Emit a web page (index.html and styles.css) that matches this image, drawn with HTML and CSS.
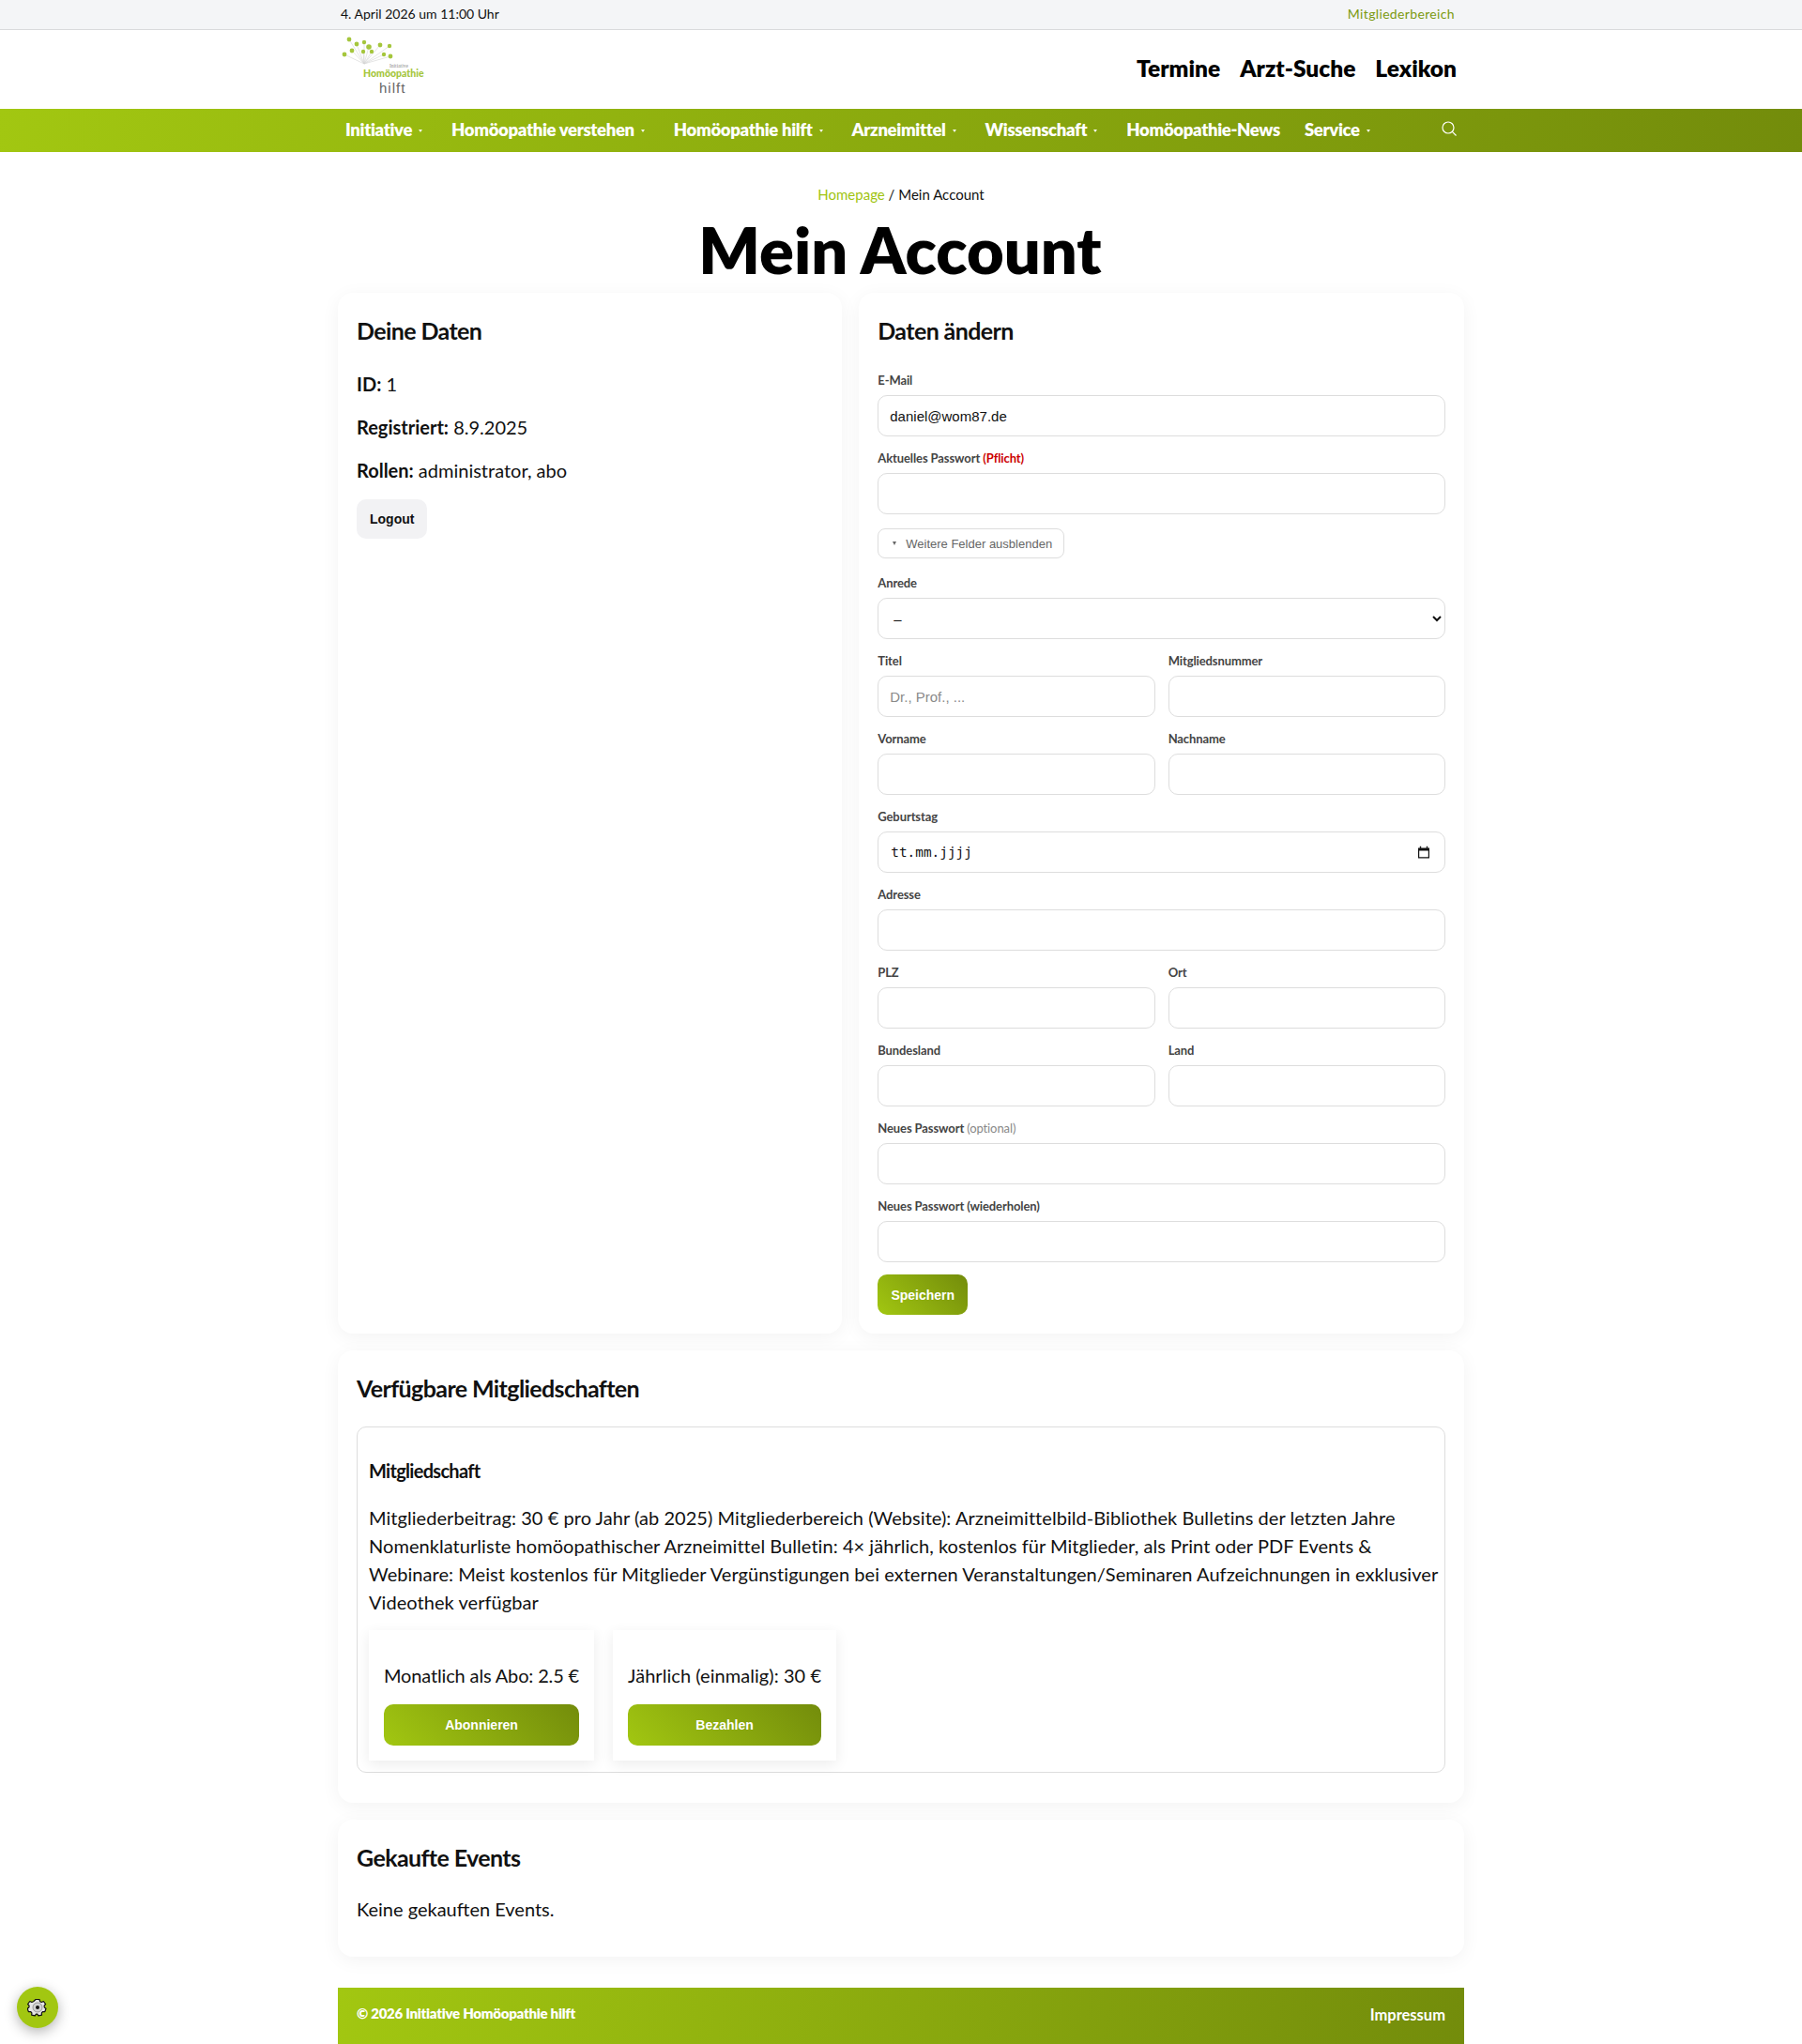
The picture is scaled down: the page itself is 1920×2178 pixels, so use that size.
FILE: index.html
```html
<!DOCTYPE html>
<html lang="de">
<head>
	<meta charset="utf-8">
	<meta name="viewport" content="width=device-width, initial-scale=1">
	<title>Mein Account</title>
	<link rel="stylesheet" href="styles.css">
</head>
<body>
	<div class="topbar">
		<div class="wrap topbar-inner">
			<span>4. April 2026 um 11:00 Uhr</span>
			<a href="#" class="member-link">Mitgliederbereich</a>
		</div>
	</div>

	<header class="header">
		<div class="wrap header-inner">
			<a href="#" class="logo">
				<svg width="90" height="64" viewBox="363 38 90 64">
					<g stroke="#d4d4d4" stroke-width="0.6">
						<line x1="388" y1="69" x2="372" y2="43"/>
						<line x1="388" y1="69" x2="380" y2="48"/>
						<line x1="388" y1="69" x2="388" y2="46"/>
						<line x1="388" y1="69" x2="393" y2="51"/>
						<line x1="388" y1="69" x2="405" y2="49"/>
						<line x1="388" y1="69" x2="415" y2="50"/>
						<line x1="388" y1="69" x2="367" y2="59"/>
						<line x1="388" y1="69" x2="375" y2="55"/>
						<line x1="388" y1="69" x2="387" y2="56"/>
						<line x1="388" y1="69" x2="396" y2="56"/>
						<line x1="388" y1="69" x2="409" y2="59"/>
						<line x1="388" y1="69" x2="416" y2="61"/>
					</g>
					<g fill="#a5c63c">
						<circle cx="372" cy="43" r="2.4"/>
						<circle cx="380" cy="48" r="2.4"/>
						<circle cx="388" cy="46" r="2.2"/>
						<circle cx="393" cy="51" r="2.8"/>
						<circle cx="405" cy="49" r="2.4"/>
						<circle cx="415" cy="50" r="2.2"/>
						<circle cx="367" cy="59" r="2.4"/>
						<circle cx="375" cy="55" r="2.4"/>
						<circle cx="387" cy="56" r="2.2"/>
						<circle cx="396" cy="56" r="2.2"/>
						<circle cx="409" cy="59" r="2.2"/>
						<circle cx="416" cy="61" r="2.4"/>
					</g>
					<text x="415" y="73" class="logo-small">Initiative</text>
					<text x="387" y="83" class="logo-green">Homöopathie</text>
					<text x="404" y="100" class="logo-dark">hilft</text>
				</svg>
			</a>
			<nav class="quick-links">
				<a href="#">Termine</a>
				<a href="#">Arzt-Suche</a>
				<a href="#">Lexikon</a>
			</nav>
		</div>
	</header>

	<nav class="mainnav">
		<div class="wrap mainnav-inner">
			<a href="#" class="has-caret">Initiative</a>
			<a href="#" class="has-caret">Homöopathie verstehen</a>
			<a href="#" class="has-caret">Homöopathie hilft</a>
			<a href="#" class="has-caret">Arzneimittel</a>
			<a href="#" class="has-caret">Wissenschaft</a>
			<a href="#">Homöopathie-News</a>
			<a href="#" class="has-caret">Service</a>
			<svg class="search-icon" width="18" height="18" viewBox="0 0 18 18" fill="none" stroke="#fff" stroke-width="1.2">
				<circle cx="8" cy="8" r="6"/>
				<line x1="12.4" y1="12.4" x2="16.5" y2="16.5"/>
			</svg>
		</div>
	</nav>

	<main class="content">
		<p class="breadcrumb"><a href="#">Homepage</a> / Mein Account</p>
		<h1>Mein Account</h1>

		<div class="account-grid">
			<section class="card">
				<h2>Deine Daten</h2>
				<p class="info info-first"><strong>ID:</strong> 1</p>
				<p class="info"><strong>Registriert:</strong> 8.9.2025</p>
				<p class="info"><strong>Rollen:</strong> administrator, abo</p>
				<button class="btn-logout">Logout</button>
			</section>

			<section class="card">
				<h2>Daten ändern</h2>
				<form class="account-form">
					<div class="field">
						<label>E-Mail</label>
						<input type="email" value="daniel@wom87.de">
					</div>
					<div class="field">
						<label>Aktuelles Passwort <span class="required">(Pflicht)</span></label>
						<input type="password">
					</div>
					<button type="button" class="toggle-btn"><span class="toggle-caret"></span>Weitere Felder ausblenden</button>
					<div class="field">
						<label>Anrede</label>
						<select><option>–</option></select>
					</div>
					<div class="field-row">
						<div class="field">
							<label>Titel</label>
							<input type="text" placeholder="Dr., Prof., ...">
						</div>
						<div class="field">
							<label>Mitgliedsnummer</label>
							<input type="text">
						</div>
					</div>
					<div class="field-row">
						<div class="field">
							<label>Vorname</label>
							<input type="text">
						</div>
						<div class="field">
							<label>Nachname</label>
							<input type="text">
						</div>
					</div>
					<div class="field">
						<label>Geburtstag</label>
						<div class="date-input">
							<span>tt.mm.jjjj</span>
							<svg width="14" height="14" viewBox="0 0 14 14">
								<path d="M1 2.5h12v11H1z M2.2 5.5v6.8h9.6v-6.8z" fill="#111" fill-rule="evenodd"/>
								<path d="M3.5 .8v2M10.5 .8v2" stroke="#111" stroke-width="1.4"/>
							</svg>
						</div>
					</div>
					<div class="field">
						<label>Adresse</label>
						<input type="text">
					</div>
					<div class="field-row">
						<div class="field">
							<label>PLZ</label>
							<input type="text">
						</div>
						<div class="field">
							<label>Ort</label>
							<input type="text">
						</div>
					</div>
					<div class="field-row">
						<div class="field">
							<label>Bundesland</label>
							<input type="text">
						</div>
						<div class="field">
							<label>Land</label>
							<input type="text">
						</div>
					</div>
					<div class="field">
						<label>Neues Passwort <span class="optional">(optional)</span></label>
						<input type="password">
					</div>
					<div class="field">
						<label>Neues Passwort (wiederholen)</label>
						<input type="password">
					</div>
					<button type="button" class="btn-green btn-save">Speichern</button>
				</form>
			</section>
		</div>

		<section class="card">
			<h2>Verfügbare Mitgliedschaften</h2>
			<div class="plan">
				<h3>Mitgliedschaft</h3>
				<p>Mitgliederbeitrag: 30 € pro Jahr (ab 2025) Mitgliederbereich (Website): Arzneimittelbild-Bibliothek Bulletins der letzten Jahre Nomenklaturliste homöopathischer Arzneimittel Bulletin: 4× jährlich, kostenlos für Mitglieder, als Print oder PDF Events &amp; Webinare: Meist kostenlos für Mitglieder Vergünstigungen bei externen Veranstaltungen/Seminaren Aufzeichnungen in exklusiver Videothek verfügbar</p>
				<div class="prices">
					<div class="price">
						<p>Monatlich als Abo: 2.5 €</p>
						<button class="btn-green">Abonnieren</button>
					</div>
					<div class="price">
						<p>Jährlich (einmalig): 30 €</p>
						<button class="btn-green">Bezahlen</button>
					</div>
				</div>
			</div>
		</section>

		<section class="card">
			<h2>Gekaufte Events</h2>
			<p class="no-events">Keine gekauften Events.</p>
		</section>
	</main>

	<footer class="footer">
		<span class="copyright">© 2026 Initiative Homöopathie hilft</span>
		<a href="#">Impressum</a>
	</footer>

	<button class="cookie-btn" aria-label="Einstellungen">
		<svg width="22" height="22" viewBox="0 0 22 22">
			<path d="M9 2.5h4l.6 2.2 1.7.8 2.1-1 2.2 3-1.5 1.6.2 1.9 1.7 1.2-1.2 3.4-2.2-.1-1.3 1.4.2 2.2-3.6.8-1.1-1.8H9.4l-1.1 1.8-3.6-.8.2-2.2-1.3-1.4-2.2.1L.2 12.2l1.7-1.2.2-1.9L.6 7.5l2.2-3 2.1 1 1.7-.8z" fill="#e6e6e6" stroke="#111" stroke-width="1.2" stroke-linejoin="round"/>
			<circle cx="11" cy="11" r="5" fill="#d2d2d2" stroke="#888" stroke-width="0.8"/>
			<circle cx="11" cy="11" r="2" fill="#111"/>
		</svg>
	</button>
</body>
</html>
```

FILE: styles.css
```css
* {
	box-sizing: border-box;
}
body {
	margin: 0;
	font-family: Lato, "Liberation Sans", sans-serif;
	background: #fff;
	color: #111;
}
a {
	text-decoration: none;
}
.wrap {
	width: 1200px;
	margin: 0 auto;
	padding: 0 8px 0 3px;
}

.topbar {
	height: 32px;
	background: #f4f5f7;
	border-bottom: 1px solid #d9dadc;
	font-size: 14px;
}
.topbar-inner {
	display: flex;
	justify-content: space-between;
	align-items: center;
	height: 29px;
	padding-right: 10px;
}
.member-link {
	color: #7c9a10;
	letter-spacing: 0.35px;
}

.header-inner {
	display: flex;
	justify-content: space-between;
	align-items: center;
	height: 84px;
	padding-bottom: 3px;
}
.logo {
	display: block;
	height: 64px;
	margin-top: -7px;
}
.logo svg {
	overflow: visible;
}
.logo-small {
	font: 5.5px "Liberation Serif", serif;
	fill: #888;
}
.logo-green {
	font: 900 10.5px Lato, sans-serif;
	fill: #a5c63c;
}
.logo-dark {
	font: 15px "Liberation Sans", sans-serif;
	fill: #666;
	letter-spacing: 1px;
}
.quick-links {
	display: flex;
	gap: 21px;
}
.quick-links a {
	color: #000;
	font-size: 24.5px;
	font-weight: 800;
}

.mainnav {
	height: 46px;
	background: linear-gradient(100deg, #a2c711 0%, #738c0b 100%);
}
.mainnav-inner {
	display: flex;
	align-items: center;
	height: 46px;
	position: relative;
	padding-bottom: 2px;
}
.mainnav a {
	display: flex;
	align-items: center;
	padding: 0 13px;
	color: #fff;
	font-size: 18.5px;
	font-weight: 800;
	letter-spacing: -0.32px;
}
.mainnav a:first-child {
	padding-left: 5px;
}
.mainnav a.has-caret::after {
	content: "";
	margin: 2px 5px 0 7px;
	border-left: 2.5px solid transparent;
	border-right: 2.5px solid transparent;
	border-top: 3px solid rgba(255, 255, 255, 0.9);
}
.search-icon {
	margin-left: auto;
	margin-top: -2px;
	margin-right: -1px;
}

.content {
	width: 1200px;
	margin: 0 auto;
}
.breadcrumb {
	margin: 0;
	padding-top: 35px;
	text-align: center;
	font-size: 15px;
	line-height: 20px;
}
.breadcrumb a {
	color: #9fc40f;
}
h1 {
	margin: 8px 0 0;
	padding-right: 2px;
	text-align: center;
	font-size: 68.5px;
	line-height: 82px;
	font-weight: 800;
	color: #000;
	height: 87px;
}
.account-grid {
	display: grid;
	grid-template-columns: 1fr 1.2fr;
	gap: 18px;
	margin-bottom: 18px;
}
.card {
	background: #fff;
	border-radius: 16px;
	padding: 20px;
	box-shadow: 0 4px 20px rgba(0, 0, 0, 0.05);
}
.content > .card {
	margin-bottom: 18px;
}
h2 {
	margin: 5px 0 0;
	font-size: 25px;
	line-height: 30px;
	font-weight: 700;
	letter-spacing: -0.6px;
	color: #111;
}
.info {
	margin: 26px 0 0;
	font-size: 20px;
	line-height: 20px;
}
.info-first {
	margin-top: 32px;
}
.btn-logout {
	display: block;
	margin-top: 21px;
	height: 42px;
	padding: 0 14px;
	border: none;
	border-radius: 10px;
	background: #f2f2f4;
	font: bold 14px "Liberation Sans", sans-serif;
	color: #111;
}

.account-form {
	display: flex;
	flex-direction: column;
	gap: 14px;
	margin-top: 29px;
}
.field-row {
	display: grid;
	grid-template-columns: 1fr 1fr;
	gap: 14px;
}
.field label {
	display: block;
	margin-bottom: 7px;
	font-size: 13px;
	line-height: 18px;
	font-weight: 700;
	letter-spacing: -0.1px;
	color: #444;
}
.required {
	color: #c00;
}
.optional {
	color: #888;
	font-weight: 400;
}
.field input,
.field select,
.date-input {
	display: block;
	width: 100%;
	height: 44px;
	padding: 0 12px;
	border: 1px solid #ddd;
	border-radius: 10px;
	background: #fff;
	font: 15px "Liberation Sans", sans-serif;
	color: #111;
}
.field input::placeholder {
	color: #8a8a8a;
}
.date-input {
	display: flex;
	justify-content: space-between;
	align-items: center;
	padding: 0 15px 0 13px;
	font: 14.4px "DejaVu Sans Mono", monospace;
}
.toggle-btn {
	align-self: flex-start;
	display: flex;
	align-items: center;
	height: 32px;
	padding: 0 12px 0 15px;
	margin: 1px 0 3px;
	border: 1px solid #ddd;
	border-radius: 8px;
	background: #fff;
	font: 13px "Liberation Sans", sans-serif;
	color: #666;
}
.toggle-caret {
	margin-right: 10px;
	border-left: 2.5px solid transparent;
	border-right: 2.5px solid transparent;
	border-top: 4px solid #666;
}
.btn-green {
	height: 44px;
	border: none;
	border-radius: 10px;
	background: linear-gradient(45deg, #a2c711 0%, #738c0b 100%);
	color: #fff;
	font: bold 14px "Liberation Sans", sans-serif;
}
.btn-save {
	align-self: flex-start;
	width: 96px;
	height: 43px;
	margin-top: -1px;
}

.plan {
	margin: 26px 0 12px;
	padding: 12px;
	border: 1px solid #ddd;
	border-radius: 10px;
}
.plan h3 {
	margin: 22px 0 0;
	font-size: 20px;
	line-height: 24px;
	font-weight: 700;
	letter-spacing: -0.7px;
}
.plan > p {
	margin: 23px -6px 0 0;
	font-size: 20px;
	line-height: 30px;
	letter-spacing: 0.05px;
}
.prices {
	display: flex;
	gap: 20px;
	margin-top: 15px;
}
.price {
	display: flex;
	flex-direction: column;
	padding: 36px 16px 16px;
	box-shadow: 0 4px 14px rgba(0, 0, 0, 0.08);
}
.price p {
	margin: 0 0 19px;
	font-size: 20px;
	line-height: 24px;
	letter-spacing: -0.15px;
	white-space: nowrap;
}
.price + .price p {
	letter-spacing: 0.05px;
}
.no-events {
	margin: 28px 0 19px;
	font-size: 20px;
	line-height: 24px;
}

.footer {
	display: flex;
	justify-content: space-between;
	width: 1200px;
	height: 60px;
	margin: 33px auto 0;
	padding: 18px 20px 0;
	background: linear-gradient(100deg, #a2c711 0%, #738c0b 100%);
	color: #fff;
	font-weight: 700;
}
.copyright {
	font-size: 15px;
	font-weight: 800;
	letter-spacing: -0.25px;
}
.footer a {
	margin-top: 1px;
	color: #fff;
	font-size: 16.5px;
}

.cookie-btn {
	position: fixed;
	left: 18px;
	bottom: 17px;
	display: flex;
	align-items: center;
	justify-content: center;
	width: 44px;
	height: 44px;
	padding: 0;
	border: none;
	border-radius: 50%;
	background: #a2c711;
	box-shadow: 0 4px 14px rgba(0, 0, 0, 0.3);
}
```
